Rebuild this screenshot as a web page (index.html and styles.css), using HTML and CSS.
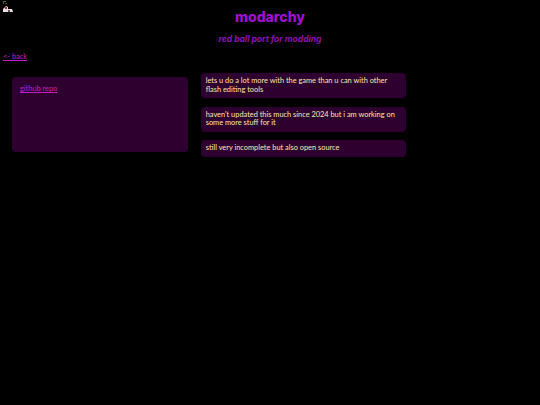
FILE: index.html
```html
<!DOCTYPE html>
<html>
<head>
    <title>modarchy</title>
    <link rel="stylesheet" href="styles.css">
</head>
<body>

    <!-- corner mascot -->
    <svg class="mascot" width="14" height="13" viewBox="0 0 14 13">
        <rect x="3" y="1" width="1" height="3" fill="#5d5a20"/>
        <rect x="4" y="1" width="2" height="1" fill="#6b6826"/>
        <rect x="5" y="3" width="2" height="1" fill="#4d4a1c"/>
        <path d="M3 12 L3 9 L6 6 L8 7 L8 9 L12 9 L13 12 Z" fill="#e9dfe2"/>
        <rect x="5" y="7" width="2" height="2" fill="#a5303c"/>
        <rect x="8" y="10" width="2" height="2" fill="#55505a"/>
    </svg>

    <h1 class="title">modarchy</h1>
    <h3 class="subtitle">red ball port for modding</h3>

    <a class="back" href="#">&lt;- back</a>

    <div class="columns">
        <div class="links card">
            <a href="#">github repo</a>
        </div>
        <div class="notes">
            <p class="card">lets u do a lot more with the game than u can with other flash editing tools</p>
            <p class="card">haven't updated this much since 2024 but i am working on some more stuff for it</p>
            <p class="card">still very incomplete but also open source</p>
        </div>
    </div>

</body>
</html>
```

FILE: styles.css
```css
body {
    margin: 0;
    background-color: #000;
    color: #ffe9a8;
    font-family: "Lato", "Open Sans", sans-serif;
    font-size: 7.4px;
    line-height: 8.33px;
}

a {
    color: #c020c0;
}

.mascot {
    position: absolute;
    top: 0;
    left: 0;
}

.title {
    margin: 0;
    padding-top: 8px;
    text-align: center;
    color: #a010d0;
    font-family: "Inter", sans-serif;
    font-size: 14px;
    line-height: 18px;
    font-weight: 800;
}

.subtitle {
    margin: 0;
    padding-top: 8px;
    text-align: center;
    color: #9010b0;
    font-family: "Inter", sans-serif;
    font-size: 8.5px;
    line-height: 11px;
    font-style: italic;
    font-weight: 700;
}

.back {
    display: block;
    width: fit-content;
    margin: 8px 0 0 3px;
}

.columns {
    display: flex;
    align-items: flex-start;
    gap: 13px;
    margin: 12px 0 0 12px;
}

.card {
    background-color: #2d0030;
    border-radius: 4px;
}

.links {
    width: 160px;
    height: 59px;
    margin-top: 4px;
    padding: 8px;
}

.notes {
    display: flex;
    flex-direction: column;
    gap: 8.33px;
    width: 205px;
}

.notes p {
    margin: 0;
    padding: 4.17px 4.7px;
}
```
